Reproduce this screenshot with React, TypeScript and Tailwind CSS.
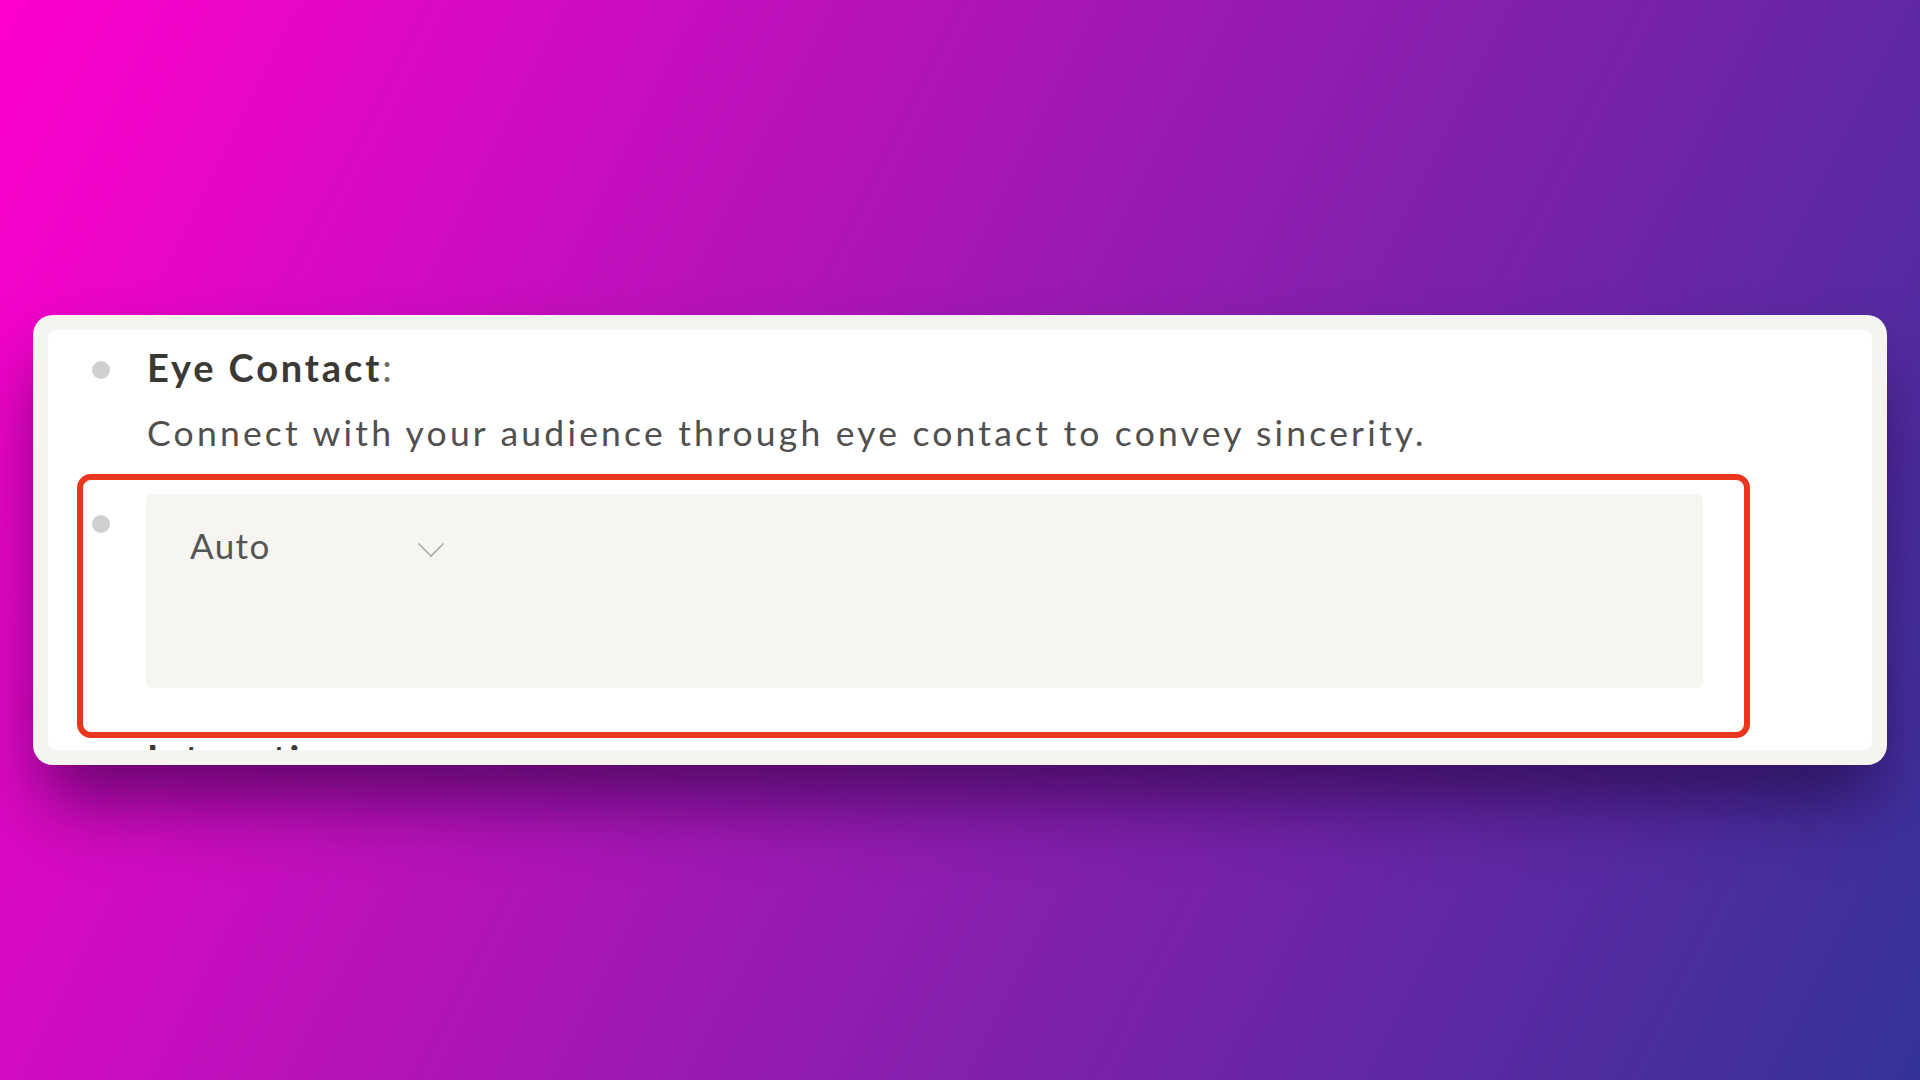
export default function App() {
  return (
    <div className="flex h-[1080px] w-[1920px] items-start bg-[linear-gradient(117deg,#ff00cc_0%,#333399_100%)] pl-[33px] pt-[315px] font-['Lato',sans-serif]">
      <div className="w-[1854px] rounded-[20px] bg-[#f5f4f0] p-[15px] shadow-[0_45px_70px_-10px_rgba(25,0,50,0.6)]">
        <div className="h-[420px] overflow-hidden rounded-lg bg-white pl-[44px] pt-[15px]">
          {/* Eye contact item */}
          <div className="flex gap-[37px]">
            <div className="mt-[16px] h-[18px] w-[18px] shrink-0 rounded-full bg-[#d0d0d0]" />
            <div>
              <p className="text-[38px] leading-[1.2] font-bold tracking-[0.075em] text-[#3a3935]">
                Eye Contact<span className="font-normal text-[#6b6b6b]">:</span>
              </p>
              <p className="mt-[21px] text-[35.5px] leading-[1.2] tracking-[0.09em] text-[#505050]">
                Connect with your audience through eye contact to convey sincerity.
              </p>
            </div>
          </div>

          {/* highlighted select row */}
          <div className="-ml-[15px] mt-[20px] flex w-[1673px] rounded-[14px] border-[6px] border-[#e8371e] pb-[44px] pl-[9px] pr-[41px] pt-[14px]">
            <div className="mt-[21px] h-[18px] w-[18px] shrink-0 rounded-full bg-[#d0d0d0]" />
            <div className="ml-[36px] h-[194px] w-[1557px] rounded-md bg-[#f6f5f2] pl-[44px] pt-[30px]">
              <div className="flex w-[255px] items-center justify-between text-[35px] leading-[1.2] tracking-[0.04em] text-[#555555]">
                <span>Auto</span>
                <svg className="mt-[10px]" width="28" height="16" viewBox="0 0 28 16" fill="none">
                  <path d="M1.5 1.5 L14 14 L26.5 1.5" stroke="#ababab" strokeWidth="1.6" />
                </svg>
              </div>
            </div>
          </div>

          {/* next item, cut off */}
          <div className="-mt-[2px] flex gap-[37px]">
            <div className="mt-[16px] h-[18px] w-[18px] shrink-0 rounded-full bg-[#d0d0d0]" />
            <p className="text-[38px] leading-[1.2] font-bold tracking-[0.075em] text-[#3a3935]">
              Intonation<span className="font-normal text-[#6b6b6b]">:</span>
            </p>
          </div>
        </div>
      </div>
    </div>
  );
}
